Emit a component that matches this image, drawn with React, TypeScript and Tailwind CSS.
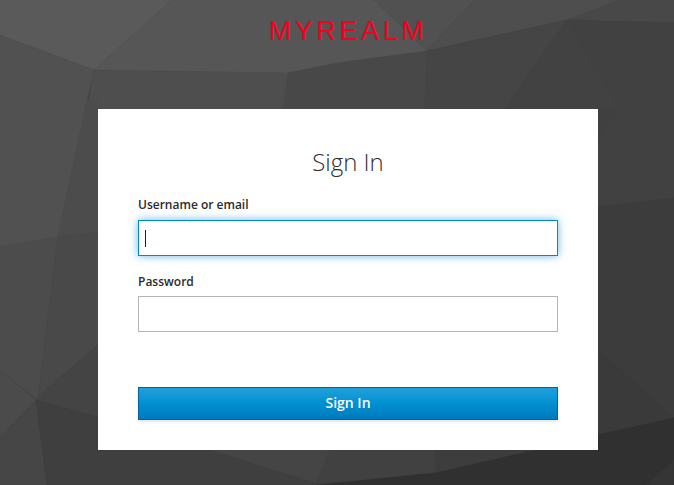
import React from 'react';

// low-poly backdrop, [points, fill]
const facets: [string, string][] = [
    ['0,0 172,0 94,70 0,35', '#5a5a5a'],
    ['172,0 374,0 427,51 337,63 288,73 94,70', '#565656'],
    ['374,0 474,0 427,51', '#515151'],
    ['474,0 620,0 567,20 427,51', '#4e4e4e'],
    ['620,0 674,0 674,23 567,20', '#484848'],
    ['0,35 94,70 87,100 58,237 0,247', '#515151'],
    ['94,70 288,73 283,110 87,110', '#4e4e4e'],
    ['288,73 337,63 427,51 425,110 283,110', '#484848'],
    ['427,51 567,20 504,110 425,110', '#454545'],
    ['567,20 620,110 504,110', '#424242'],
    ['567,20 674,23 674,198 598,207 598,140 620,110', '#414141'],
    ['87,100 98,100 98,232 58,237', '#4c4c4c'],
    ['0,247 58,237 38,400 0,370', '#4c4c4c'],
    ['58,237 98,232 98,345 45,390 38,400', '#494949'],
    ['45,390 98,345 98,417 36,400', '#444444'],
    ['598,207 674,198 674,418 598,350', '#3c3c3c'],
    ['598,350 674,418 597,435', '#3a3a3a'],
    ['0,370 36,400 0,437', '#4b4b4b'],
    ['0,437 36,400 47,485 0,485', '#464646'],
    ['36,400 98,417 98,450 210,450 316,483 316,485 47,485', '#3f3f3f'],
    ['210,450 330,450 316,483', '#454545'],
    ['330,450 435,450 435,473 316,483', '#414141'],
    ['435,450 536,450 435,473', '#3d3d3d'],
    ['536,450 597,435 674,418 674,460 646,485 316,485 435,473', '#303030'],
    ['674,460 674,485 646,485', '#353535'],
];

const Backdrop: React.FC = () => (
    <svg className="absolute inset-0 w-full h-full" viewBox="0 0 674 485" preserveAspectRatio="none">
        <rect width="674" height="485" fill="#404040" />
        {facets.map(([points, fill]) => <polygon key={points} points={points} fill={fill} stroke={fill} strokeWidth="0.5" />)}
    </svg>
);

const App: React.FC = () => {
    return (
        <div className="relative h-[485px] overflow-hidden font-['Open_Sans',sans-serif]">
            <Backdrop />
            <div className="relative flex flex-col items-center pl-[22px]">
                <div className="h-[109px] pt-[12px] font-['Liberation_Sans',sans-serif] text-[27px] leading-[38px] tracking-[3.6px] text-[#f5001f] [-webkit-text-stroke:0.15px_#f5001f]">
                    MYREALM
                </div>
                <div className="w-[500px] h-[341px] bg-white px-10 pt-[35px]">
                    <h1 className="text-center text-[24px] leading-[36px] font-light text-[#2f2f2f]">Sign In</h1>
                    <form className="mt-[15px]">
                        <label className="block text-[12px] leading-[20px] font-semibold text-[#2b2b2b] mb-[5px]">Username or email</label>
                        <div className="relative">
                            <input className="block w-full h-[36px] bg-white border border-[#0088ce] outline-none shadow-[0_0_8px_rgba(0,136,206,0.6)]" />
                            <span className="absolute left-[7px] top-[10px] w-px h-[17px] bg-[#222222]" />
                        </div>
                        <label className="block mt-[16px] text-[12px] leading-[20px] font-semibold text-[#2b2b2b] mb-[4px]">Password</label>
                        <input type="password" className="block w-full h-[36px] bg-white border border-[#b4b4b4] outline-none" />
                        <button
                            type="button"
                            className="block w-full h-[33px] mt-[55px] pb-[2px] border border-[#00659c] bg-gradient-to-b from-[#1fa0da] via-[#0090d1] to-[#0079be] text-white text-[14px] font-semibold shadow-[0_2px_3px_rgba(3,3,3,0.1)]"
                        >
                            Sign In
                        </button>
                    </form>
                </div>
            </div>
        </div>
    );
};

export default App;
